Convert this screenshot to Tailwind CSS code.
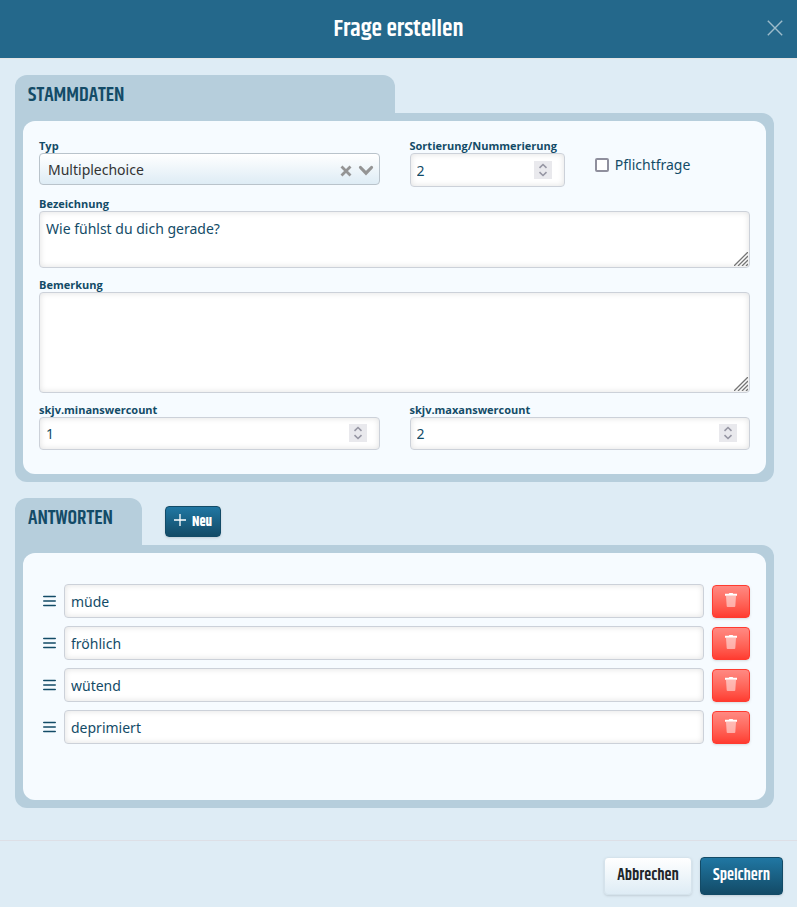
<!DOCTYPE html>
<html lang="de">
<head>
    <meta charset="utf-8">
    <meta name="viewport" content="width=device-width, initial-scale=1">
    <title>Frage erstellen</title>
    <script src="https://cdn.jsdelivr.net/npm/@tailwindcss/browser@4"></script>
</head>
<body class="min-h-screen flex flex-col bg-[#deecf5] text-[#134b67] text-sm font-['Noto_Sans','Open_Sans',sans-serif]">
    <svg class="hidden">
        <symbol id="spinner" viewBox="0 0 18 18">
            <rect width="18" height="18" fill="#e9e9ed"/>
            <path d="M5.500 6.800 9 3.500l3.500 3.300M5.500 11.200 9 14.500l3.500-3.300" fill="none" stroke="#9696a3" stroke-width="1.600"/>
        </symbol>
        <symbol id="grip" viewBox="0 0 14 14">
            <path d="M0 14 14 0M4 14 14 4M8 14l6-6M12 14l2-2" fill="none" stroke="#757575" stroke-width="1.300"/>
        </symbol>
        <symbol id="bars" viewBox="0 0 13 12">
            <path d="M.8 1.500h11.400M.8 6h11.400M.8 10.500h11.400" fill="none" stroke="#134b67" stroke-width="1.600" stroke-linecap="round"/>
        </symbol>
        <symbol id="trash" viewBox="0 0 12 14">
            <path d="M1 3h10l-.7 10.200a.9.9 0 0 1-.9.8H2.600a.9.9 0 0 1-.9-.8z" fill="#fff" fill-opacity=".5"/>
            <path d="M0 .8h3.700L4.400 0h3.200l.7.8H12v1.900H0z" fill="#fff"/>
        </symbol>
    </svg>

    <header class="relative h-[59px] flex items-center justify-center bg-[#24688b] border-b border-[#e5e5e5]">
        <h1 class="text-2xl leading-7 pb-px font-semibold text-white font-['Khand',sans-serif]">Frage erstellen</h1>
        <button type="button" aria-label="Schließen" class="absolute right-3.5 top-5">
            <svg class="size-4" viewBox="0 0 16 16"><path d="M.8.8l14.400 14.400M15.200.8.8 15.200" fill="none" stroke="#9dbccb" stroke-width="1.400"/></svg>
        </button>
    </header>

    <main class="flex-1 pl-[15px] pr-[23px] pt-4">
        <section>
            <div class="w-1/2 h-[38px] rounded-t-xl bg-[#b6cedc] px-[13px] pt-[5px]">
                <h2 class="text-xl leading-8 font-semibold font-['Khand',sans-serif]">STAMMDATEN</h2>
            </div>
            <div class="rounded-xl rounded-tl-none bg-[#b6cedc] p-2">
                <div class="rounded-xl bg-[#f6fbff] px-4 pt-[18px] pb-6 flex flex-col gap-2.5">
                    <div class="grid grid-cols-2 gap-[30px]">
                        <div>
                            <label for="typ" class="block text-[11px] leading-[14px] font-bold font-['Open_Sans',sans-serif]">Typ</label>
                            <div class="relative">
                                <select id="typ" class="block w-full h-8 appearance-none rounded border border-[#b9c3cb] bg-linear-to-b from-white to-[#deecf5] px-2 pt-0.5 text-[#333333]">
                                    <option>Multiplechoice</option>
                                </select>
                                <svg class="absolute right-[28px] top-3 w-3 h-3 pointer-events-none" viewBox="0 0 12 12"><path d="M1.500 1.500l9 9M10.500 1.500l-9 9" stroke="#949494" stroke-width="2.800"/></svg>
                                <svg class="absolute right-[6px] top-3 w-4 h-3 pointer-events-none" viewBox="0 0 16 12"><path d="M2.500 2.500 8 8.200l5.500-5.700" fill="none" stroke="#949494" stroke-width="3.200" stroke-linecap="round"/></svg>
                            </div>
                        </div>
                        <div class="grid grid-cols-2 gap-[30px]">
                            <div>
                                <label for="sort" class="block text-[11px] leading-[14px] font-bold whitespace-nowrap font-['Open_Sans',sans-serif]">Sortierung/Nummerierung</label>
                                <div class="relative">
                                    <input id="sort" type="number" value="2" class="block w-full h-[34px] [appearance:textfield] rounded border border-[#ccd1d9] bg-white px-1.5 shadow-[inset_0_0_6px_rgba(0,0,0,0.12)]">
                                    <svg class="absolute right-[13px] top-2 size-[18px] pointer-events-none"><use href="#spinner"/></svg>
                                </div>
                            </div>
                            <label class="flex items-center gap-1.5 self-center pt-1">
                                <input type="checkbox" class="size-3.5 appearance-none rounded-xs border-2 border-[#8f8f9d] bg-white">
                                Pflichtfrage
                            </label>
                        </div>
                    </div>
                    <div>
                        <label for="bezeichnung" class="block text-[11px] leading-[14px] font-bold font-['Open_Sans',sans-serif]">Bezeichnung</label>
                        <div class="relative">
                            <textarea id="bezeichnung" class="block w-full h-[57px] resize-none rounded border border-[#ccd1d9] bg-white px-1.5 py-[7px] shadow-[inset_0_0_6px_rgba(0,0,0,0.12)]">Wie fühlst du dich gerade?</textarea>
                            <svg class="absolute right-0.5 bottom-0.5 size-3.5 pointer-events-none"><use href="#grip"/></svg>
                        </div>
                    </div>
                    <div>
                        <label for="bemerkung" class="block text-[11px] leading-[14px] font-bold font-['Open_Sans',sans-serif]">Bemerkung</label>
                        <div class="relative">
                            <textarea id="bemerkung" class="block w-full h-[101px] resize-none rounded border border-[#ccd1d9] bg-white px-1.5 py-[7px] shadow-[inset_0_0_6px_rgba(0,0,0,0.12)]"></textarea>
                            <svg class="absolute right-0.5 bottom-0.5 size-3.5 pointer-events-none"><use href="#grip"/></svg>
                        </div>
                    </div>
                    <div class="grid grid-cols-2 gap-[30px]">
                        <div>
                            <label for="min" class="block text-[11px] leading-[14px] font-bold font-['Open_Sans',sans-serif]">skjv.minanswercount</label>
                            <div class="relative">
                                <input id="min" type="number" value="1" class="block w-full h-[33px] [appearance:textfield] rounded border border-[#ccd1d9] bg-white px-1.5 shadow-[inset_0_0_6px_rgba(0,0,0,0.12)]">
                                <svg class="absolute right-[13px] top-[7px] size-[18px] pointer-events-none"><use href="#spinner"/></svg>
                            </div>
                        </div>
                        <div>
                            <label for="max" class="block text-[11px] leading-[14px] font-bold font-['Open_Sans',sans-serif]">skjv.maxanswercount</label>
                            <div class="relative">
                                <input id="max" type="number" value="2" class="block w-full h-[33px] [appearance:textfield] rounded border border-[#ccd1d9] bg-white px-1.5 shadow-[inset_0_0_6px_rgba(0,0,0,0.12)]">
                                <svg class="absolute right-[13px] top-[7px] size-[18px] pointer-events-none"><use href="#spinner"/></svg>
                            </div>
                        </div>
                    </div>
                </div>
            </div>
        </section>

        <section class="mt-4">
            <div class="flex items-start gap-[23px]">
                <div class="w-[127px] h-[47px] rounded-t-xl bg-[#b6cedc] px-[13px] pt-[5px]">
                    <h2 class="text-xl leading-8 font-semibold font-['Khand',sans-serif]">ANTWORTEN</h2>
                </div>
                <button type="button" class="mt-2 w-14 h-[31px] flex items-center justify-center gap-1.5 rounded border border-[#134b67] bg-linear-to-b from-[#2077a3] to-[#134b67] text-white text-sm font-bold shadow-sm font-['Khand',sans-serif]">
                    <svg class="size-3 mb-1" viewBox="0 0 12 12"><path d="M6 0v12M0 6h12" stroke="#fff" stroke-width="1.300"/></svg>
                    Neu
                </button>
            </div>
            <div class="rounded-xl rounded-tl-none bg-[#b6cedc] p-2">
                <ul id="answers" class="rounded-xl bg-[#f6fbff] px-4 pt-[31px] pb-14 flex flex-col gap-2"></ul>
            </div>
        </section>
    </main>

    <footer class="mt-8 h-[67px] flex justify-end items-start gap-2 border-t border-[#dddfe6] pt-4 pr-3.5">
        <button type="button" class="h-[38px] w-[88px] rounded border border-[#d5e3ec] bg-linear-to-b from-white to-[#deecf5] text-[#212529] text-base font-semibold shadow-sm font-['Khand',sans-serif]">Abbrechen</button>
        <button type="submit" class="h-[38px] w-[83px] rounded border border-[#134b67] bg-linear-to-b from-[#2077a3] to-[#134b67] text-white text-base font-semibold shadow-sm font-['Khand',sans-serif]">Speichern</button>
    </footer>

    <script>
    const answers = ['müde', 'fröhlich', 'wütend', 'deprimiert'];

    document.getElementById('answers').innerHTML = answers.map((answer, i) => `
        <li class="flex items-center gap-2">
            <svg class="ml-1 w-[13px] h-3 cursor-move"><use href="#bars"/></svg>
            <input type="text" value="${answer}" aria-label="Antwort ${i + 1}"
                   class="flex-1 min-w-0 h-[34px] rounded border border-[#ccd1d9] bg-white px-1.5 shadow-[inset_0_0_6px_rgba(0,0,0,0.12)]">
            <button type="button" aria-label="Löschen"
                    class="w-[38px] h-[33px] flex justify-center pt-[7px] rounded border border-[#ff3b30] bg-linear-to-b from-[#ff8982] to-[#ff3b30] shadow-sm">
                <svg class="w-3 h-3.5"><use href="#trash"/></svg>
            </button>
        </li>
    `).join('');
    </script>
</body>
</html>
